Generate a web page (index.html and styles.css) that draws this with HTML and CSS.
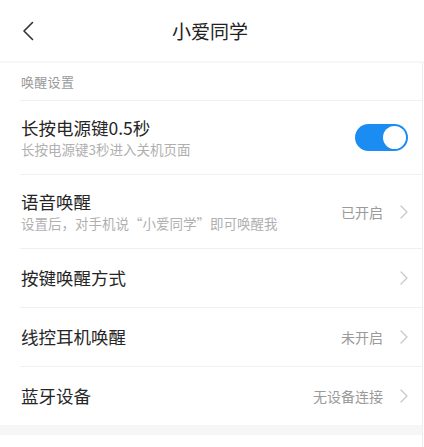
FILE: index.html
```html
<!DOCTYPE html>
<html lang="zh-CN">
<head>
<meta charset="utf-8">
<link rel="stylesheet" href="styles.css">
</head>
<body>
<div class="topbar">
  <div class="back">
    <svg width="12" height="20" viewBox="0 0 12 20"><path d="M10.5 1.5 L2 10 L10.5 18.5" fill="none" stroke="#333" stroke-width="1.6" stroke-linecap="round" stroke-linejoin="round"/></svg>
  </div>
  <div class="title">小爱同学</div>
  <div></div>
</div>
<div class="band thin"></div>
<div class="list">
  <div class="section">唤醒设置</div>
  <div class="row tall">
    <div class="texts">
      <div class="name">长按电源键0.5秒</div>
      <div class="desc">长按电源键3秒进入关机页面</div>
    </div>
    <div class="toggle"><span class="knob"></span></div>
  </div>
  <div class="row tall">
    <div class="texts">
      <div class="name">语音唤醒</div>
      <div class="desc">设置后，对手机说“小爱同学”即可唤醒我</div>
    </div>
    <div class="value">已开启</div>
    <svg class="chev" width="8" height="14" viewBox="0 0 8 14"><path d="M1 1 L7 7 L1 13" fill="none" stroke="#c8c8c8" stroke-width="1.3" stroke-linecap="round" stroke-linejoin="round"/></svg>
  </div>
  <div class="row">
    <div class="texts"><div class="name">按键唤醒方式</div></div>
    <svg class="chev" width="8" height="14" viewBox="0 0 8 14"><path d="M1 1 L7 7 L1 13" fill="none" stroke="#c8c8c8" stroke-width="1.3" stroke-linecap="round" stroke-linejoin="round"/></svg>
  </div>
  <div class="row">
    <div class="texts"><div class="name">线控耳机唤醒</div></div>
    <div class="value">未开启</div>
    <svg class="chev" width="8" height="14" viewBox="0 0 8 14"><path d="M1 1 L7 7 L1 13" fill="none" stroke="#c8c8c8" stroke-width="1.3" stroke-linecap="round" stroke-linejoin="round"/></svg>
  </div>
  <div class="row">
    <div class="texts"><div class="name">蓝牙设备</div></div>
    <div class="value">无设备连接</div>
    <svg class="chev" width="8" height="14" viewBox="0 0 8 14"><path d="M1 1 L7 7 L1 13" fill="none" stroke="#c8c8c8" stroke-width="1.3" stroke-linecap="round" stroke-linejoin="round"/></svg>
  </div>
  <div class="band"></div>
  <div class="section">常用设置</div>
</div>
</body>
</html>
```
FILE: styles.css
```css
html, body {
  margin: 0;
  padding: 0;
  background: #fff;
  font-family: "Noto Sans CJK SC", "Noto Sans", sans-serif;
  overflow: hidden;
}
.topbar {
  height: 61px;
  display: grid;
  grid-template-columns: 1fr auto 1fr;
  align-items: center;
}
.back {
  padding-left: 22px;
  display: flex;
  align-items: center;
  height: 20px;
}
.title {
  font-size: 19px;
  color: #222;
  line-height: 1;
  padding-right: 4px;
}
.band {
  height: 10px;
  background: #f6f6f6;
}
.band.thin {
  height: 2px;
  background: #f7f7f7;
}
.list {
  width: 422px;
  border-right: 1px solid #eeeeee;
}
.section {
  height: 37px;
  display: flex;
  align-items: center;
  padding-left: 21px;
  font-size: 13px;
  color: #9a9a9a;
  letter-spacing: 0.3px;
}
.row {
  margin-left: 20px;
  border-top: 1px solid #f0f0f0;
  height: 58px;
  padding-right: 14px;
  display: flex;
  align-items: center;
}
.row.tall {
  height: 73px;
}
.texts {
  flex: 1;
  padding-left: 1px;
}
.name {
  font-size: 17.5px;
  color: #262626;
  line-height: 22px;
}
.desc {
  font-size: 13.5px;
  color: #b0b0b0;
  line-height: 18px;
  margin-top: 1px;
}
.value {
  font-size: 14px;
  color: #9a9a9a;
  margin-right: 17px;
}
.chev {
  display: block;
}
.toggle {
  width: 53px;
  height: 27px;
  border-radius: 14px;
  background: #1a8cf2;
  position: relative;
}
.knob {
  position: absolute;
  right: 2px;
  top: 2px;
  width: 23px;
  height: 23px;
  border-radius: 50%;
  background: #fff;
}
```
